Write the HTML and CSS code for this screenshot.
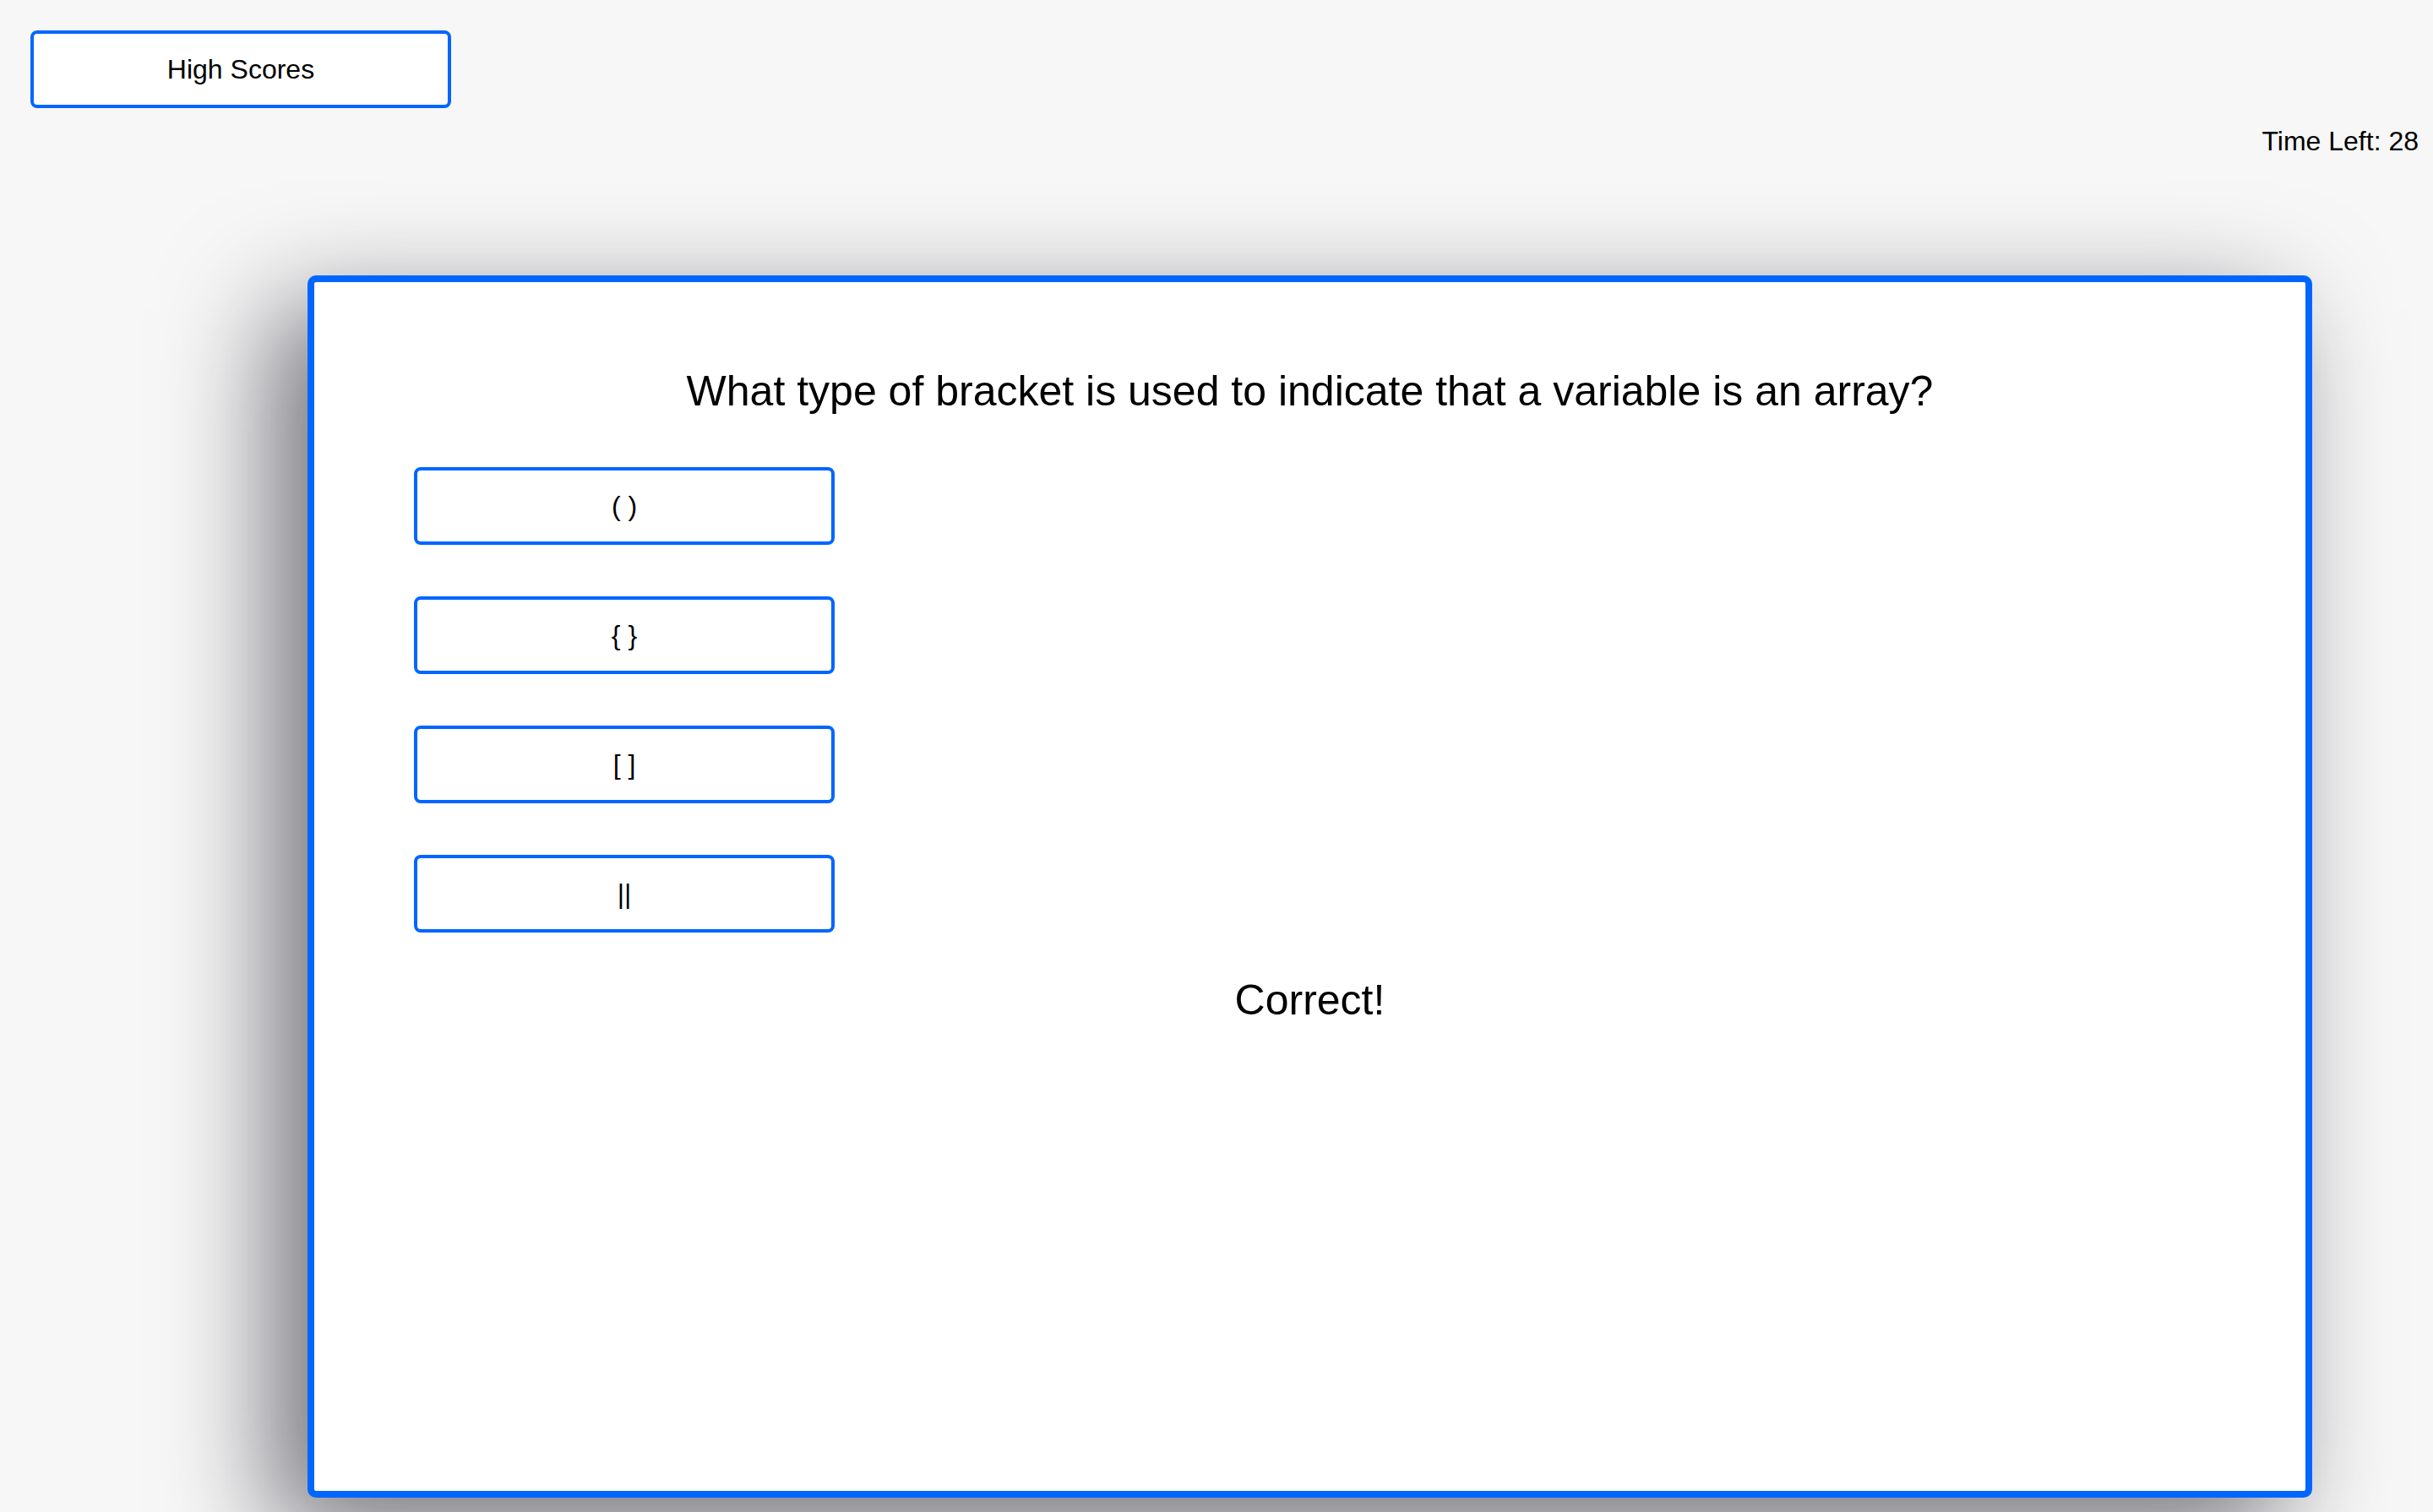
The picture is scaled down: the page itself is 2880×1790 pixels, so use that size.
FILE: index.html
```html
<!DOCTYPE html>
<html lang="en">
<head>
<meta charset="utf-8">
<title>Code Quiz</title>
<link rel="stylesheet" href="styles.css">
</head>
<body>
  <header class="top">
    <button class="btn btn-scores" type="button">High Scores</button>
    <div class="timer">Time Left: 28</div>
  </header>
  <main class="card">
    <h2 class="question">What type of bracket is used to indicate that a variable is an array?</h2>
    <div class="answers">
      <button class="btn btn-answer" type="button">( )</button>
      <button class="btn btn-answer" type="button">{ }</button>
      <button class="btn btn-answer" type="button">[ ]</button>
      <button class="btn btn-answer" type="button">||</button>
    </div>
    <h2 class="result">Correct!</h2>
  </main>
</body>
</html>
```

FILE: styles.css
```css
* { box-sizing: border-box; }

html, body {
  margin: 0;
  height: 1790px;
  overflow: hidden;
}

body {
  background: #f7f7f7;
  font-family: "Liberation Sans", Arial, Helvetica, sans-serif;
  color: #000;
  padding: 36px 17px 0 36px;
}

.top {
  display: flex;
  flex-direction: column;
}

.btn {
  font-family: "Liberation Sans", Arial, Helvetica, sans-serif;
  font-size: 32px;
  color: #000;
  background: #fff;
  border: 4px solid #0066ff;
  border-radius: 8px;
  width: 498px;
  height: 92px;
  padding: 0;
  cursor: pointer;
}

.timer {
  align-self: flex-end;
  font-size: 32px;
  line-height: 37px;
  margin-top: 21px;
}

.card {
  margin: 140px 126px 0 328px;
  height: 1447px;
  background: #fff;
  border: 8px solid #0066ff;
  border-radius: 10px;
  box-shadow: -40px 40px 130px rgb(112, 112, 120);
  display: flex;
  flex-direction: column;
  padding-top: 101px;
}

.question {
  margin: 0;
  font-size: 50px;
  font-weight: 400;
  line-height: 57px;
  text-align: center;
}

.answers {
  display: flex;
  flex-direction: column;
  gap: 61px;
  margin-top: 61px;
  padding-left: 118px;
}

.result {
  margin: 52px 0 0;
  font-size: 50px;
  font-weight: 400;
  line-height: 57px;
  text-align: center;
}
```
